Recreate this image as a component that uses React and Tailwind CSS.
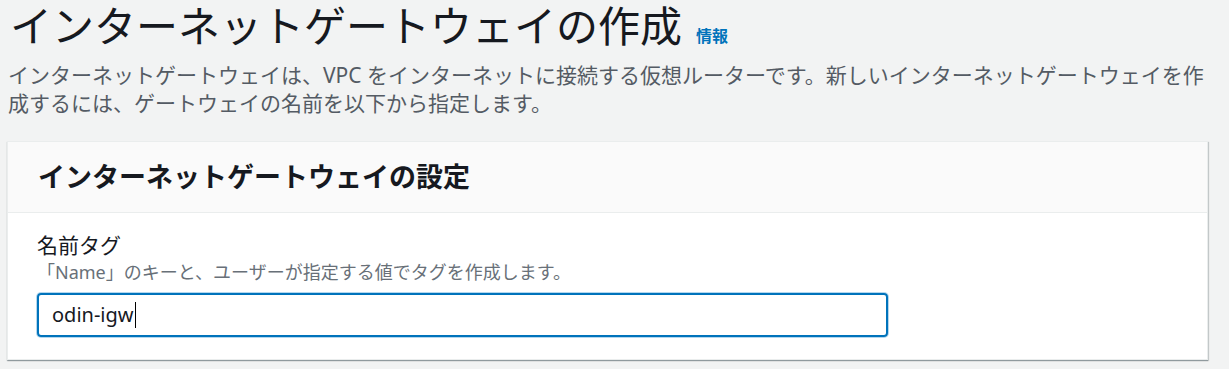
export default function App() {
  const font = { fontFamily: '"Noto Sans", "Noto Sans CJK JP", sans-serif' };

  return (
    <div className="min-h-[369px] w-full bg-[#f2f3f3] overflow-hidden" style={font}>
      {/* Page header */}
      <div className="pl-[8px] pr-[10px] pt-[2px]">
        <div className="flex items-baseline gap-[14px] pl-[2px] h-[48px]">
          <h1 className="text-[42px] leading-[48px] font-normal text-[#16191f]">
            インターネットゲートウェイの作成
          </h1>
          <a className="text-[16px] font-bold text-[#0073bb]">情報</a>
        </div>
        <p className="mt-[11px] text-[21px] leading-[28px] text-[#545b64]">
          インターネットゲートウェイは、VPC をインターネットに接続する仮想ルーターです。新しいインターネットゲートウェイを作成するには、ゲートウェイの名前を以下から指定します。
        </p>
      </div>

      {/* Settings card */}
      <div className="mt-[24px] ml-[7px] mr-[21px] bg-white border border-[#eaeded] shadow-[0_1px_1px_0_rgba(0,28,36,0.3),1px_1px_1px_0_rgba(0,28,36,0.15)]">
        <div className="h-[71px] bg-[#fafafa] border-b border-[#eaeded] flex items-center pl-[30px]">
          <h2 className="text-[27px] font-bold text-[#16191f]">インターネットゲートウェイの設定</h2>
        </div>
        <div className="pl-[29px] pt-[18px] pb-[22px]">
          <div className="text-[21px] leading-[28px] text-[#16191f]">名前タグ</div>
          <div className="text-[18px] leading-[26px] text-[#687078]">
            「Name」のキーと、ユーザーが指定する値でタグを作成します。
          </div>
          <div className="mt-[8px] w-[851px] h-[44px] rounded-[4px] border-2 border-[#0073bb] shadow-[0_0_0_1px_#b4d7ee] flex items-center pl-[13px]">
            <span className="text-[20px] text-[#16191f]">odin-igw</span>
            <span className="w-[1.5px] h-[26px] bg-black ml-[1px]"></span>
          </div>
        </div>
      </div>
    </div>
  );
}
